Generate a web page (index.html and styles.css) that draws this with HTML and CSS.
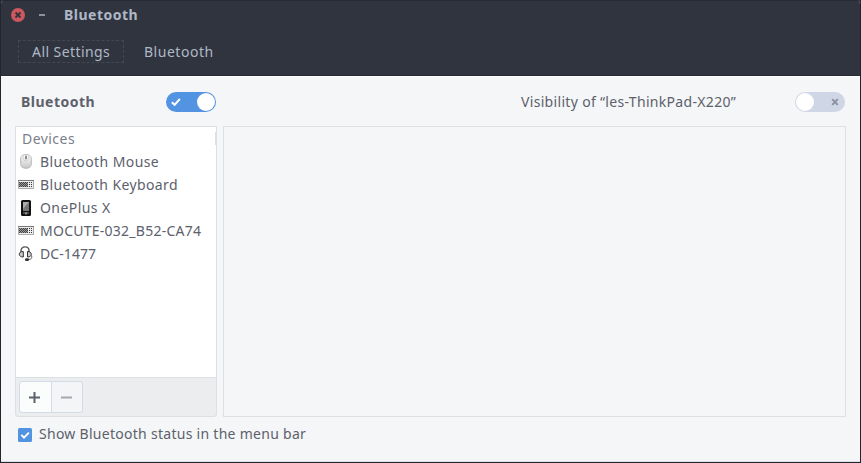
FILE: index.html
```html
<!DOCTYPE html>
<html lang="en">
<head>
<meta charset="utf-8">
<title>Bluetooth</title>
<link rel="stylesheet" href="styles.css">
</head>
<body>
<div class="window">
  <header class="header">
    <div class="titlebar">
      <svg class="close" width="14" height="14" viewBox="0 0 14 14"><circle cx="7" cy="7" r="7" fill="#cc575d"/><path d="M4.5 4.5l5 5M9.5 4.5l-5 5" stroke="#2f343f" stroke-width="1.8"/></svg>
      <span class="minimize"></span>
      <h1 class="title"><span class="t-title">Bluetooth</span></h1>
    </div>
    <nav class="nav">
      <span class="nav-button"><span class="t-all">All Settings</span></span>
      <span class="nav-current t-nav">Bluetooth</span>
    </nav>
  </header>
  <main class="content">
    <div class="switches">
      <strong class="switch-title t-title">Bluetooth</strong>
      <span class="switch on"><svg class="mark" width="10" height="10" viewBox="0 0 10 10"><path d="M.9 5.2l2.7 2.6L8.8 2" fill="none" stroke="#fff" stroke-width="2"/></svg><span class="knob"></span></span>
      <span class="visibility t-vis">Visibility of “les-ThinkPad-X220”</span>
      <span class="switch off"><span class="knob"></span><svg class="mark" width="8" height="8" viewBox="0 0 8 8"><path d="M1.2 1.2l5.6 5.6M6.8 1.2L1.2 6.8" stroke="#8a909f" stroke-width="1.9"/></svg></span>
    </div>
    <div class="panes">
      <section class="sidebar">
        <div class="list">
          <div class="list-head"><span class="t-devices">Devices</span></div>
          <div class="row">
            <svg width="16" height="16" viewBox="0 0 16 16"><defs><linearGradient id="m" x2="0" y2="1"><stop stop-color="#fff"/><stop offset="1" stop-color="#c6c6c6"/></linearGradient></defs><path d="M8 .6c3.800 0 5.300 1.600 5.300 4.600v4.200c0 3.200-2 4.900-5.300 4.900s-5.300-1.700-5.300-4.900V5.200c0-3 1.500-4.600 5.300-4.600z" fill="url(#m)" stroke="#b4b4b4"/><path d="M5.300 1.400v3.300c0 1.400 1 2.200 2.700 2.200s2.700-.8 2.700-2.200V1.400" fill="none" stroke="#ccc" stroke-width=".8"/><path d="M8 1.800v3.500" stroke="#777" stroke-width="1.600"/></svg>
            <span class="t-mouse">Bluetooth Mouse</span>
          </div>
          <div class="row">
            <svg width="16" height="16" viewBox="0 0 16 16"><path d="M.5 3.500h15v8H.5z" fill="#eee" stroke="#aaa"/><path d="M0 3.500h16" stroke="#777"/><path d="M1 5h9v5H1z" fill="#999"/><path d="M1 5.500h9M1 7.500h9M1 9.500h9" stroke="#444" stroke-dasharray="1 1"/><path d="M2 6.500h8M2 8.500h8" stroke="#444" stroke-dasharray="1 1"/><path d="M11 5.500h4M11 7.500h4M11 9.500h4" stroke="#333" stroke-dasharray="1 1"/></svg>
            <span class="t-keyboard">Bluetooth Keyboard</span>
          </div>
          <div class="row">
            <svg width="16" height="16" viewBox="0 0 16 16"><rect x="3" y="0" width="10" height="16" rx="1.500" fill="#111"/><rect x="5" y="2" width="6" height="9" fill="#777"/><path d="M5 2h6L5 9z" fill="#aaa"/><path d="M5 13h2M9 13h2" stroke="#888"/><rect x="7" y="12" width="2" height="2.500" fill="#888"/></svg>
            <span class="t-oneplus">OnePlus X</span>
          </div>
          <div class="row">
            <svg width="16" height="16" viewBox="0 0 16 16"><path d="M.5 3.500h15v8H.5z" fill="#eee" stroke="#aaa"/><path d="M0 3.500h16" stroke="#777"/><path d="M1 5h9v5H1z" fill="#999"/><path d="M1 5.500h9M1 7.500h9M1 9.500h9" stroke="#444" stroke-dasharray="1 1"/><path d="M2 6.500h8M2 8.500h8" stroke="#444" stroke-dasharray="1 1"/><path d="M11 5.500h4M11 7.500h4M11 9.500h4" stroke="#333" stroke-dasharray="1 1"/></svg>
            <span class="t-mocute">MOCUTE-032_B52-CA74</span>
          </div>
          <div class="row">
            <svg width="16" height="16" viewBox="0 0 16 16"><path d="M3 7V4.700C3 2.300 4.600.9 7 .9s4 1.400 4 3.800V7" fill="none" stroke="#555" stroke-width="1.400"/><path d="M5.300 5.500v5.500C2.800 11 1.300 10 1.300 8.300s1.300-2.800 4-2.800zM9.500 5.500v5.500c2.500 0 3.800-1 3.800-2.700s-1.300-2.800-3.800-2.800z" fill="#ccc" stroke="#333"/><path d="M13.300 9.500c1.200 2.300.2 4-3.300 4" fill="none" stroke="#555"/><rect x="7" y="12.200" width="4" height="2.800" rx="1.300" fill="#333"/></svg>
            <span class="t-dc">DC-1477</span>
          </div>
        </div>
        <div class="toolbar">
          <span class="tool add"><svg width="11" height="11" viewBox="0 0 11 11"><path d="M0 5.500h11M5.500 0v11" stroke="#5c616c" stroke-width="2"/></svg></span><span class="tool remove"><svg width="11" height="11" viewBox="0 0 11 11"><path d="M0 5.500h11" stroke="#a5a8ae" stroke-width="2"/></svg></span>
        </div>
      </section>
      <section class="details"></section>
    </div>
    <div class="footer">
      <svg width="14" height="14" viewBox="0 0 14 14"><rect width="14" height="14" rx="1.500" fill="#5294e2"/><path d="M3.300 6.900l2.700 2.700 4.900-5" fill="none" stroke="#fff" stroke-width="2"/></svg>
      <span class="t-show">Show Bluetooth status in the menu bar</span>
    </div>
  </main>
</div>
</body>
</html>
```
FILE: styles.css
```css
* { box-sizing: border-box; }
body {
  margin: 0;
  background: #20232b;
  font: 14px/20px "Noto Sans", "Open Sans", sans-serif;
  color: #5c616c;
}
svg { display: block; flex: none; }
span { white-space: nowrap; }
.window {
  width: 861px;
  height: 463px;
  border: 1px solid #22252e;
  border-top: 0;
  border-radius: 4px 4px 0 0;
  overflow: hidden;
  background: #f5f6f7;
}
.header {
  height: 76px;
  background: #2f343f;
  border-top: 1px solid #262a33;
  border-bottom: 1px solid #262932;
  color: #afb8c6;
}
.titlebar { display: flex; align-items: center; height: 27px; padding-left: 10px; }
.minimize { width: 6px; height: 2px; margin-left: 14px; background: #8b919d; }
.title { margin: 0 0 0 19px; font-size: 14px; line-height: 20px; }
.nav { display: flex; align-items: center; height: 23px; margin-top: 12px; padding-left: 17px; }
.nav-button {
  display: flex;
  align-items: center;
  width: 106px;
  height: 23px;
  padding-left: 13px;
  border: 1px dashed #434853;
}
.nav-current { margin-left: 20px; }
.content {
  height: 386px;
  padding: 0 14px;
  border-top: 1px solid #fff;
  border-bottom: 1px solid #dcdfe3;
}
.switches { display: flex; align-items: center; height: 49px; padding: 1px 1px 0 6px; }
.switch-title { width: 145px; }
.switch { display: flex; align-items: center; width: 50px; height: 20px; border-radius: 10px; }
.knob { width: 18px; height: 18px; border-radius: 50%; background: #fff; }
.on { background: #5294e2; justify-content: space-between; padding: 0 1px 0 5px; }
.off { margin-left: auto; background: #cfd6e6; justify-content: space-between; padding: 0 6px 0 1px; }
.visibility { margin-left: 305px; }
.panes { display: flex; gap: 6px; height: 291px; }
.sidebar {
  display: flex;
  flex-direction: column;
  width: 202px;
  border: 1px solid #dcdfe3;
  border-radius: 0 0 3px 3px;
  background: #ebedef;
  overflow: hidden;
}
.list { flex: 1; background: #fff; }
.list-head {
  display: flex;
  align-items: center;
  height: 23px;
  padding-left: 6px;
  color: #7a7f8b;
  background: linear-gradient(#dcdfe3, #dcdfe3) right 5px / 1px 13px no-repeat;
}
.row { display: flex; align-items: center; gap: 6px; height: 23px; padding-left: 2px; }
.toolbar { display: flex; height: 39px; padding: 3px; border-top: 1px solid #dcdfe3; }
.tool { display: flex; align-items: center; justify-content: center; height: 32px; border: 1px solid #d3daea; }
.add { width: 33px; padding-right: 2px; border-radius: 3px 0 0 3px; background: #fbfcfc; }
.remove { width: 31px; padding-right: 1px; border-left: 0; border-radius: 0 3px 3px 0; background: #f4f5f6; }
.details { flex: 1; border: 1px solid #dcdfe3; }
.footer { display: flex; align-items: center; gap: 7px; height: 20px; margin-top: 7px; padding-left: 3px; }
.footer svg { margin-top: 2px; }

.t-title { letter-spacing: .5px; }
.t-all { letter-spacing: .43px; }
.t-nav { letter-spacing: .52px; }
.t-vis { letter-spacing: .32px; }
.t-devices { letter-spacing: .45px; }
.t-mouse { letter-spacing: .41px; }
.t-keyboard { letter-spacing: .38px; }
.t-oneplus { letter-spacing: .42px; }
.t-mocute { letter-spacing: .25px; }
.t-dc { letter-spacing: .08px; }
.t-show { letter-spacing: .28px; }
```
